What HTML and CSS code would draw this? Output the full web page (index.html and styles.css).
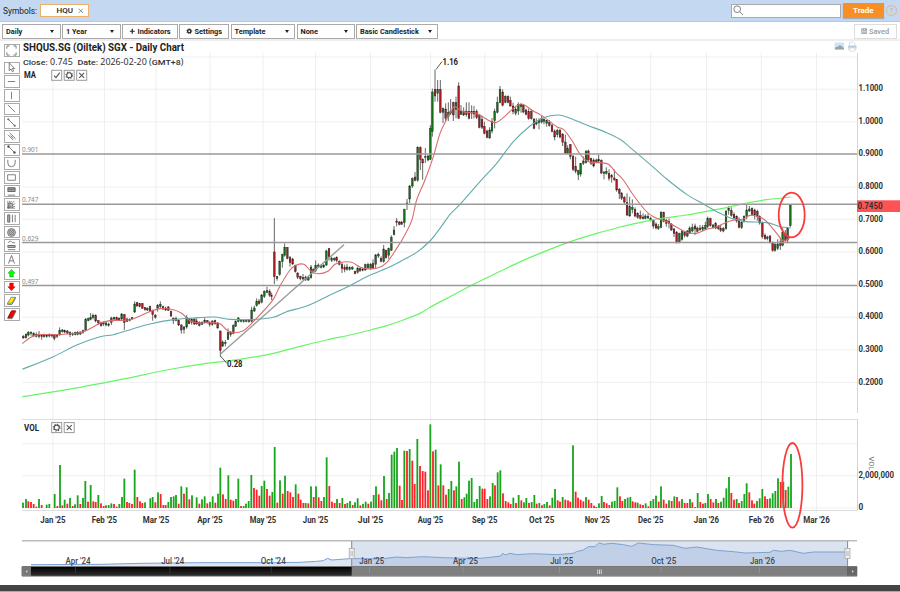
FILE: index.html
```html
<!DOCTYPE html>
<html lang="en">
<head>
<meta charset="utf-8">
<title>Daily Chart</title>
<link rel="stylesheet" href="styles.css">
</head>
<body>
<header class="symbols">
  <span class="symbols-label">Symbols:</span>
  <div class="symbol-tab"><span>HQU</span><svg class="tab-x" viewBox="0 0 6 6"><path d="M.7.7l4.6 4.6M5.3.7L.7 5.3"/></svg></div>
  <div class="search"><svg viewBox="0 0 12 12"><circle cx="4.6" cy="4.6" r="3.7"/><path d="M7.3 7.3L11 11"/></svg></div>
  <div class="trade">Trade</div>
  <div class="help">?</div>
</header>
<nav class="toolbar">
  <div class="box daily">Daily<i></i></div>
  <div class="box year">1 Year<i></i></div>
  <div class="box ind"><svg viewBox="0 0 8 8"><path d="M4 1v6M1 4h6" stroke="#222" stroke-width="1.5"/></svg>Indicators</div>
  <div class="box set"><svg viewBox="0 0 8 8"><circle cx="4" cy="4" r="2" fill="none" stroke="#222" stroke-width="1.7"/><circle cx="4" cy="4" r="3.1" fill="none" stroke="#222" stroke-width="1" stroke-dasharray="1.3 1.13"/></svg>Settings</div>
  <div class="box tpl">Template<i></i></div>
  <div class="box none">None<i></i></div>
  <div class="box type">Basic Candlestick<i></i></div>
  <div class="box saved"><svg viewBox="0 0 8 8"><path d="M1 1h6v6H1zM2.5 1v2.3h3V1M2 5.2h4" fill="none" stroke="#888"/></svg>Saved</div>
</nav>
<main class="workspace">
  <aside class="tools" id="tools"></aside>
  <svg class="chart" id="chart" viewBox="20 41 880 544"></svg>
</main>
<footer class="bottom"></footer>
<script src="chart.js"></script>
</body>
</html>
```
FILE: styles.css
```css
* { box-sizing: border-box; }
body { margin: 0; width: 900px; height: 592px; overflow: hidden; background: #fff; font-family: Roboto, sans-serif; color: #222; display: flex; flex-direction: column; }
.symbols { flex: none; height: 22px; background: #c4d9f1; border-bottom: 1px solid #bfc6ce; display: flex; align-items: center; padding: 0 3px; font-size: 8.4px; }
.symbols-label { width: 36.5px; }
.symbol-tab { width: 49px; height: 13px; background: #fff; border: 1px solid #efb06c; display: flex; align-items: center; justify-content: flex-end; gap: 5px; padding-right: 4px; font-size: 8px; font-weight: 500; }
.tab-x { width: 5.5px; height: 5.5px; fill: none; stroke: #888; stroke-width: 1; }
.search { margin-left: auto; width: 110px; height: 14px; background: #fff; border: 1px solid #aaa; padding-left: 1px; display: flex; align-items: center; }
.search svg { width: 11px; height: 11px; fill: none; stroke: #777; stroke-width: 1; }
.trade { width: 41.5px; height: 14.5px; margin-left: 2px; background: #f78f24; box-shadow: 0 1px 1px #8888; color: #fff; font-size: 8px; font-weight: 700; line-height: 15px; text-align: center; }
.help { width: 11px; height: 11px; margin-left: 2px; border: 1px solid #d9ba95; border-radius: 50%; color: #dfae78; line-height: 9.5px; text-align: center; font-size: 8px; }
.toolbar { flex: none; height: 19px; border-bottom: 2px solid #eee; display: flex; gap: 1.5px; padding: 1px 3.5px 0 2px; align-items: center; }
.box { height: 15px; border: 1px solid #aaa; display: flex; align-items: center; font-size: 7.35px; font-weight: 700; padding: 0 5.5px 0 3px; white-space: nowrap; }
.box i { margin-left: auto; border: 2.6px solid transparent; border-top: 3px solid #222; border-bottom: 0; }
.box svg { width: 6.5px; height: 6.5px; margin-right: 2px; }
.daily { width: 58.5px; } .year { width: 58.5px; } .ind { width: 55.5px; padding: 0 0 0 6px; } .set { width: 50px; padding: 0 0 0 6px; }
.tpl { width: 64.5px; } .none { width: 58px; } .type { width: 82px; }
.saved { margin-left: auto; width: 43px; padding: 0 0 0 6px; border-color: #ddd; color: #999; font-weight: 500; }
.workspace { flex: none; height: 544px; display: flex; }
.tools { width: 20px; padding: 3px 0 0 4px; }
.tool { width: 15.5px; height: 12.7px; margin-bottom: 1px; border: 1px solid #aaa; display: flex; justify-content: center; align-items: center; }
.tool:first-child { margin-bottom: 4.5px; height: 13px; }
.tool svg { width: 11px; height: 11px; fill: none; stroke: #666; stroke-width: .9; overflow: visible; }
.chart { width: 880px; height: 544px; display: block; }
.chart text { font-family: Roboto, sans-serif; font-size: 8.3px; font-weight: 700; fill: #333; }
.chart .title { font-size: 10px; fill: #222; }
.chart .info { font-family: "Noto Sans", sans-serif; font-size: 8px; font-weight: 400; }
.chart .info tspan { font-family: Roboto, sans-serif; font-weight: 500; }
.chart .level { font-family: "Noto Sans", sans-serif; font-size: 6.7px; font-weight: 400; fill: #888; }
.chart .time { font-size: 8.3px; font-weight: 500; fill: #444; }
.chart .mark { font-size: 8.3px; fill: #222; }
.chart .axis-name { font-weight: 400; font-size: 7.5px; fill: #777; }
.line { fill: none; }
.bottom { height: 7px; background: #444; border-bottom: 1px solid #aaa; }
```
FILE: chart.js
```js
const chart = document.getElementById('chart');
const out = [];
const line = (x1, y1, x2, y2, s, w = 1) => out.push(`<path d="M${x1} ${y1}L${x2} ${y2}" stroke="${s}" stroke-width="${w}" fill="none"/>`);
const rect = (x, y, w, h, f, extra = '') => out.push(`<rect x="${x}" y="${y}" width="${w}" height="${h}" fill="${f}" ${extra}/>`);
const text = (x, y, s, cls = '', len = 0, anchor = 'start') => out.push(`<text x="${x}" y="${y}" class="${cls}" text-anchor="${anchor}"${len ? ` textLength="${len}" lengthAdjust="spacingAndGlyphs"` : ''}>${s}</text>`);

// Grid
const months = [["Jan '25",53],["Feb '25",104.5],["Mar '25",156],["Apr '25",210],["May '25",263],["Jun '25",315.5],["Jul '25",370.5],["Aug '25",430.5],["Sep '25",484.7],["Oct '25",541.7],["Nov '25",597.3],["Dec '25",650.7],["Jan '26",706.5],["Feb '26",761.3],["Mar '26",816.5]];
months.forEach(([t, x]) => { line(x, 53, x, 514, '#efefef'); text(x, 523, t, '', t.startsWith('M') ? 26.5 : 25.3, 'middle'); });
[57,89.2,121.8,187,219.3,252,317.2,349.8,382.3,419.5,443.7,475.7,508].forEach(y => line(22, y, 857, y, '#efefef'));
line(22, 419.5, 857, 419.5, '#ddd'); line(22, 510.5, 857, 510.5, '#ddd');
line(857.5, 53, 857.5, 413, '#d4d4d4'); line(857.5, 419, 857.5, 510.5, '#d4d4d4');
for (let i = 0; i < 10; i++) text(858.5, 91.3 + i * 32.58, (1.1 - i / 10).toFixed(4), '', 24.5);

// Each group: origin, then "x bodyTop bodyBottom high low direction" in thirds of a pixel
const candles = [
[0,280,`70 169 174 165 176 r;78 163 173 160 176 g;85 157 165 153 169 g;93 157 160 154 167 g;101 160 168 157 170 r;109 163 169 157 172 g;117 163 169 153 175 r;125 166 170 162 179 r;132 163 170 161 173 g;140 165 170 162 173 g;148 163 168 160 172 r;156 164 168 162 173 g;163 165 175 163 181 r;171 163 169 162 174 g;179 151 165 142 167 g;187 150 155 147 158 g;194 152 156 149 160 g;202 153 159 150 163 r;210 157 164 154 171 r;218 160 164 157 168 g;226 158 164 155 166 g;233 158 163 153 166 g;241 156 162 154 165 g;249 152 157 149 161 g;257 118 152 114 154 g;265 115 122 113 124 g;272 113 118 99 121 g;279 106 113 101 118 g;287 106 123 103 127 r;295 122 129 121 135 r;303 129 137 125 140 r;310 128 132 124 138 g;318 129 135 125 139 g;326 132 136 128 140 r;334 114 127 110 135 g;342 113 117 110 121 g;350 113 121 110 123 r;357 115 120 112 122 g;365 102 117 99 120 g;373 104 128 102 150 r;381 117 124 113 126 g;389 118 122 115 124 g;396 113 117 111 118 g;404 72 96 64 99 g;411 68 78 66 80 r;419 71 80 69 82 r;427 71 85 69 87 r;435 83 89 81 92 r;442 85 90 82 93 g;450 80 94 77 96 r;458 91 104 89 122 r;466 106 112 102 116 r;473 76 86 72 95 g;481 73 80 64 85 g;489 80 87 77 90 r;497 84 90 80 93 g;505 81 91 78 93 r;513 94 108 92 111 r;520 115 121 112 132 r;528 115 121 110 124 g;536 121 135 117 138 r;544 135 150 132 161 r;552 141 148 138 161 g;560 113 141 105 146 g;567 116 131 114 133 r;575 117 127 115 134 g;583 117 132 115 135 r;590 123 132 115 134 r;598 127 137 124 139 r;606 127 133 124 135 g;614 121 127 114 130 g;622 122 127 120 130 g;629 127 134 124 140 r;637 123 134 121 137 g;645 122 131 119 134 r;653 129 144 127 146 r;661 153 211 152 230 r;668 186 198 181 201 g;676 188 191 180 199 g;684 158 178 145 180 g;692 158 164 153 170 r;700 137 160 133 163 g;707 124 139 121 141 g;715 114 124 111 127 g;723 120 124 117 127 g;731 121 125 118 128 g;739 121 125 118 127 g;747 121 125 117 128 r;755 90 125 80 127 g;763 84 93 77 96 g;770 65 77 55 80 g;777 63 71 57 74 r;785 45 67 42 70 g;793 34 49 31 54 g;801 32 37 20 40 g;809 34 46 28 51 r;815 47 50 38 60 r`],
[200,200,`223 156 230 54 252 r;231 230 236 228 242 g;239 184 224 182 227 g;247 164 185 161 203 g;254 142 166 130 170 g;262 142 175 141 178 r;270 173 188 168 200 r;278 177 192 174 195 r;286 196 215 194 218 r;293 219 232 217 237 r;301 229 236 227 241 r;309 233 237 222 241 g;317 231 239 227 243 r;325 233 240 228 243 g;333 201 233 195 236 g;340 209 216 205 221 r;347 197 212 181 216 g;355 195 200 190 204 r;363 197 202 194 205 g;371 195 201 193 204 g;379 153 195 149 198 g;387 146 170 144 182 r;395 175 181 170 186 g;403 176 180 172 184 g;410 172 182 169 187 r;418 184 193 181 196 r;426 194 206 187 219 r;434 203 209 194 217 r;441 201 208 191 212 g;449 203 209 199 212 g;457 203 207 198 210 g;465 214 221 212 223 r;473 205 217 200 221 g;480 206 212 203 216 r;488 207 211 203 214 g;496 194 210 191 212 g;504 194 203 188 207 g;512 193 205 189 208 g;519 191 204 178 207 r;527 165 193 162 205 g;535 163 168 158 174 g;543 175 184 169 187 r;551 147 185 135 188 g;558 151 173 149 176 r;566 146 166 143 176 g;574 112 151 106 153 g;582 90 104 78 106 g;590 63 67 54 79 r;598 66 73 63 76 r;605 66 73 63 75 r`],
[380,50,`73 479 518 476 532 g;81 459 464 447 480 g;89 408 447 405 460 g;97 386 408 382 414 g;105 381 391 366 394 r;113 292 391 289 395 g;121 293 328 289 360 r;128 328 339 325 389 r;136 320 322 294 339 g;144 318 330 315 334 g;151 235 328 225 330 g;157 126 245 116 260 g;165 118 138 59 155 r;173 118 130 90 155 g;181 118 187 90 190 r;189 176 187 172 219 g;197 177 205 160 213 r;205 187 200 157 213 g;212 184 190 147 195 g;220 158 195 155 213 r;228 158 178 140 205 g;236 108 205 97 207 r;243 183 193 165 195 g;251 184 195 172 198 r;259 183 194 157 200 g;267 184 205 157 208 r;275 184 190 166 207 g;282 184 192 168 205 g;290 184 203 178 207 r;298 197 232 193 235 r;306 208 232 197 237 r;313 229 250 215 253 r;321 243 262 239 265 r;329 240 264 232 266 g;336 214 243 204 250 g;344 185 212 176 235 g;352 157 187 140 190 g;360 118 157 108 160 g;368 126 166 118 169 r;376 139 157 136 160 r;384 139 157 136 160 r;391 151 168 140 170 r;399 168 185 158 193 r;407 177 190 168 196 g;415 163 183 157 195 g;423 163 170 160 188 g;430 165 186 163 190 r;438 180 193 176 196 r;446 185 206 176 209 r;454 184 206 180 209 r;462 207 235 205 238 r;469 216 222 205 226 g;477 212 218 205 238 g;485 206 217 196 220 g;492 208 214 205 223 g;500 212 220 210 230 g;508 217 226 210 230 r;516 226 244 222 247 r;524 243 261 238 271 r;532 241 254 236 262 g;540 240 261 238 265 r;548 252 277 250 288 r;556 276 309 254 312 r;563 296 310 286 312 g;571 284 319 282 328 r;579 319 358 315 363 r;587 349 364 320 370 r;595 362 374 359 390 g;602 341 372 339 380 g;610 333 340 319 345 g;618 305 338 300 341 g;625 303 330 299 335 r;633 326 340 323 345 r;641 330 348 325 352 r;649 330 337 326 340 g;656 328 333 315 340 g;664 331 369 328 372 r;672 366 370 364 388 g;679 364 370 352 374 g;687 370 385 358 392 r;695 377 382 372 398 r;703 384 389 358 393 r;710 389 420 387 425 r;718 418 430 414 447 r;725 430 445 426 450 r;733 443 456 438 465 r;741 458 495 430 498 r;749 470 498 440 500 g`],
[600,150,`97 173 178 148 190 g;105 178 198 172 202 r;113 190 203 187 206 r;121 196 205 182 208 r;129 201 206 190 208 g;136 198 205 193 208 g;144 199 204 190 207 g;152 206 211 200 214 g;160 211 228 207 236 r;168 222 234 217 238 r;175 230 236 222 240 g;183 187 232 183 235 g;191 187 214 185 217 r;199 211 220 206 230 r;207 215 221 205 235 r;214 222 240 219 243 r;222 237 250 234 261 r;230 247 277 243 281 r;238 251 276 248 280 g;246 244 268 240 272 g;254 247 257 243 262 r;262 243 258 240 262 g;269 234 249 229 252 g;277 232 243 221 247 g;285 228 237 221 255 r;292 234 244 230 248 r;300 234 239 225 243 r;308 232 239 225 243 g;316 227 237 215 240 g;323 206 230 200 234 g;331 206 227 203 230 r;339 225 233 222 236 g;347 220 234 216 238 r;355 229 236 225 240 r;362 236 242 225 246 r;370 236 243 231 247 r;378 184 236 180 239 g;386 174 182 169 194 g;394 181 196 172 200 r;402 193 204 187 208 r;410 199 213 196 218 r;417 209 232 202 235 r;425 217 233 213 237 g;432 199 215 196 218 g;440 180 200 164 208 g;448 177 183 168 186 g;456 175 193 172 197 r;464 180 195 176 208 r;472 184 200 179 212 r;479 199 219 196 224 r;487 219 260 215 266 r;495 256 266 250 270 r;502 261 266 257 271 g;510 258 276 255 280 r;518 278 302 275 305 r;525 284 301 278 305 g;533 282 296 268 300 g;541 276 287 266 300 r;548 247 286 234 289 g;556 252 272 240 276 r;563 235 270 231 280 g;571 165 227 162 232 g`]];
candles.forEach(([ox, oy, data]) => data.split(';').forEach(row => {
  const p = row.split(' '), v = p.slice(0, 5).map(Number), x = ox + v[0] / 3;
  line(x, oy + v[3] / 3, x, oy + v[4] / 3, '#555', .9);
  rect(x - .85, oy + v[1] / 3, 1.7, (v[2] - v[1]) / 3, p[5] === 'g' ? '#157018' : '#a81c20', 'stroke="#222" stroke-width=".4"');
}));

// Volume bars: "x top direction"
const volume = [
[0,`69 278g,78 267g,85 274r,93 276r,101 282r,109 290r,117 267g,125 285r,140 284g,148 282g,164 252g,172 288r,180 165g,187 286r,194 269g,202 281r,210 264g,218 288r,225 283g,233 256g,241 282r,249 264g,256 213g,264 275r,272 225g,280 274r,287 276r,295 255g,303 280r,311 288r,318 286g,326 285g,334 280g,342 282r,350 290r,358 282g,366 261g,373 206g,381 276r,388 279r,396 282r,404 179g,412 261r,420 274r,427 279r,435 277g,451 265g,458 261g,466 277r,474 247g,482 252r,490 285r,497 285r,505 276g,513 261g,521 259g,528 255g,536 281r,544 229g,552 251r,560 232g,568 268r,576 256g,590 262g,598 281r,606 268g,614 259g,622 280r,630 276g,638 259g,646 278r,654 251g,661 173g,669 253r,677 267r,685 196g,692 269r,700 272r,708 267g,715 206g,723 288r,731 288g,738 281g,746 273g,754 195g,762 234r,770 239r,778 257r,785 228g,793 212g,801 237r,809 257r,817 246g,824 111g,832 278r,840 211g,848 251r,855 197g,863 243r,871 247r,879 261r,887 223g,895 251r`],
[300,`2 269r,10 279r,17 279g,25 280r,33 229g,41 261r,48 229g,56 262r,64 273r,72 261g,80 142g,88 228r,96 275r,104 279r,111 267g,119 279r,127 264g,135 282r,142 279g,150 273g,158 285r,165 277g,173 265g,181 286r,189 282g,197 275g,205 281r,213 275g,221 255g,228 229g,236 253r,244 271r,252 198g,260 267r,267 249g,275 134g,283 125g,291 114g,299 227r,306 270r,313 122g,321 123r,329 117g,337 152r,344 222r,352 87g,360 168r,368 183r,376 185r,384 241r,391 43g,399 124r,407 119g,415 226r,422 163g,430 226r,438 254r,446 237g,454 213g,462 241r,469 229g,477 155g,485 267r,493 262g,500 251g,507 212g,515 204g,523 276g,531 267g,539 228g,547 236r,554 236r,562 267r,570 259g,578 219g,585 226r,593 187g,601 181g,609 250r,617 273r,625 277r,632 282r,640 263g,648 279r,656 255g,664 271r,672 277g,679 264g,687 279r,695 276g,703 255g,710 281r,718 279g,726 286r,733 282g,741 276g,749 286r,757 263g,765 237g,773 271r,780 275r,788 261g,796 269r,804 271r,811 275r,819 106g,827 245r,834 263r,842 269r,850 274r,858 261g,866 269r,874 279r,882 287r,889 291r,897 280g`],
[600,`5 258g,12 276r,20 280r,28 285r,36 275g,44 273g,52 232g,60 259r,67 273r,75 267g,83 263g,91 261g,98 274r,106 277r,113 278g,121 283r,129 285r,137 280g,145 289r,152 273g,160 267g,168 257g,176 275r,183 229g,191 269r,199 281r,207 271g,215 273r,223 259g,231 261r,238 274r,246 267g,254 279r,262 279r,270 267g,277 277r,285 291r,293 249g,301 276r,309 281r,316 279g,324 252g,332 267r,340 277r,348 267g,355 279r,363 275g,371 263g,379 235g,387 201g,394 249r,402 269r,410 267g,417 279r,425 273g,433 252g,440 220g,448 247r,456 271r,463 281r,471 273g,479 265g,487 237g,495 259r,502 267r,510 265g,518 250g,526 243g,534 205g,542 216r,550 215g,557 240r,565 230g,573 132g`]];
volume.forEach(([ox, data]) => data.split(',').forEach(s => {
  const g = s.endsWith('g'), [x, y] = s.slice(0, -1).split(' ').map(Number);
  rect((ox + x / 3 - .9).toFixed(2), (410 + y / 3).toFixed(2), 1.8, ((294 - y) / 3).toFixed(2), g ? '#18a51c' : '#ff2028');
}));

// Moving averages, smoothed through their key points
const toPage = groups => groups.flatMap(([ox, oy, s]) => s.split(',').map(q => { const [x, y] = q.split(' ').map(Number); return [ox + x / 3, oy + y / 3]; }));
const smooth = (groups, colour, w = 1.1) => {
  const p = toPage(groups);
  let d = `M${p[0]}`;
  for (let i = 0; i < p.length - 1; i++) {
    const a = p[i - 1] || p[i], b = p[i], c = p[i + 1], e = p[i + 2] || c;
    d += `C${b[0] + (c[0] - a[0]) / 6} ${b[1] + (c[1] - a[1]) / 6} ${c[0] - (e[0] - b[0]) / 6} ${c[1] - (e[1] - b[1]) / 6} ${c[0]} ${c[1]}`;
  }
  out.push(`<path class="line" d="${d}" stroke="${colour}" stroke-width="${w}"/>`);
};
smooth([[0,280,'67 350,240 322,360 299,500 270,600 253,720 238,820 220,900 199'],[200,200,'380 420,450 405,500 393,560 377,610 360,660 340'],[430,190,'0 352,60 320,125 286,200 249,280 211,335 188,415 157,500 130,560 114'],[600,150,'60 231,150 211,200 203,260 195,320 184,380 173,440 159,500 149,572 141']], '#66f566', 1.2);
smooth([[0,280,'67 268,160 230,230 195,300 170,340 164,400 146,450 132,520 119,580 114,640 111,690 118,750 119,820 112'],[200,200,'260 335,320 318,380 290,440 262,500 230,560 205,600 185,650 157,690 123,720 85,750 43'],[380,50,'240 463,300 395,350 340,400 275,450 228,490 203,535 195,570 205,620 225,680 248,720 268,750 292'],[600,150,'150 43,200 87,260 133,310 162,360 190,400 207,440 215,500 218,540 230,572 234']], '#64abad');
smooth([[0,280,'67 191,90 173,115 164,160 164,200 162,250 155,300 130,330 122,390 119,440 99,480 86,520 89,545 100,570 122,600 129,655 129,680 150,700 158,730 152,755 130'],[200,200,'215 305,240 258,270 210,290 195,312 193,335 215,360 221,385 213,405 193,430 186,455 187,490 205,530 205,560 188,590 145,610 113,635 62'],[380,50,'110 450,135 390,160 320,180 250,200 208,215 180,225 170,250 185,290 190,315 205,345 218,370 203,400 175,425 162,460 183,490 200,530 230,550 238,575 270,600 312,625 335,660 338,685 343,710 370'],[600,150,'70 90,100 135,135 180,160 200,200 215,230 232,260 247,290 250,320 238,350 230,390 213,430 207,450 196,480 202,500 215,530 250,550 272,572 262']], '#d96c6e');

// Levels, trend line and annotations
[[154.1,'0.901'],[204.3,'0.747'],[242.6,'0.629'],[285.5,'0.497']].forEach(([y, t]) => { line(22, y, 857, y, '#999', 1.5); text(22, y - 2, t, 'level', 16.5); });
line(220.5, 354, 344, 244.7, '#999', 1.4);
line(436, 69.5, 442, 61.5, '#444', .9); text(442.5, 64.7, '1.16', 'mark', 15.5);
line(220.5, 356, 227, 363.5, '#444', .9); text(227, 367, '0.28', 'mark', 15.5);
rect(857, 200.3, 43, 11.7, '#ff5353'); text(857.5, 209.3, '0.7450', '', 25);
text(858.5, 478, '2,000,000', '', 35.5); text(858.5, 510.4, '0');
out.push('<text class="axis-name" transform="translate(868.5 456.5) rotate(90)" textLength="14">VOL</text>');
out.push('<g fill="none" stroke="#fa3c3c" stroke-width="1.8"><ellipse cx="791.7" cy="215" rx="13" ry="22.3"/><ellipse cx="792.4" cy="485.3" rx="10" ry="42.3"/></g>');
text(23, 51, 'SHQUS.SG (Oiltek) SGX - Daily Chart', 'title', 161);
text(23, 65.2, '<tspan>Close:</tspan> 0.745 &#160;<tspan>Date:</tspan> 2026-02-20 (<tspan>GMT+8</tspan>)', 'info', 160.5);
text(24, 78, 'MA', 'mark', 12); text(24, 430.8, 'VOL', 'mark', 15);
const small = (x, y, kind) => {
  rect(x, y, 10, 10, '#fff', 'stroke="#999" stroke-width="1"');
  const d = { check: 'M2.3 5.3l2 2 3.7-5', x: 'M2.5 2.5l5 5m0-5l-5 5' }[kind];
  out.push(`<g transform="translate(${x} ${y})" fill="none" stroke="#555" stroke-width="1.1">${d ? `<path d="${d}"/>` : '<circle cx="5" cy="5" r="2.5"/><circle cx="5" cy="5" r="3.3" stroke-dasharray="1.2 1.39"/>'}</g>`);
};
small(51.7, 70.3, 'check'); small(64.2, 70.3, 'gear'); small(76.7, 70.3, 'x');
small(51.7, 422.6, 'gear'); small(64.2, 422.6, 'x');
rect(834.5, 42.5, 9.5, 7, '#cfe4f4'); out.push('<path d="M835 49.5v-2l3-1 2-1.5 4 3v1.5z" fill="#9aa5a8"/>');
out.push('<rect x="848" y="45" width="8.5" height="5" rx="1" fill="#dfe3e8"/><path d="M849.5 45v-3h4l1.5 1.5V45M849.5 48h5.5v3h-5.5z" fill="#fff" stroke="#d5d8dc" stroke-width=".8"/><path d="M848 46.8h8.5" stroke="#abbfd6"/>');

// Navigator
const nav = toPage([[0,410,'93 464,300 463,420 460,600 458,820 458,900 457'],[300,410,'50 454,70 452,83 445,95 450,150 446,250 446,290 441,320 443,370 440,430 443,530 446,570 442,603 438,608 430,615 435,630 430,650 434,700 431,770 434,820 430,830 425,850 420,865 410,885 410,895 400'],[600,410,'0 399,10 403,35 400,70 404,95 409,115 399,160 404,220 406,255 415,290 411,350 421,400 425,435 429,510 427,520 421,545 424,570 421,610 430,640 426,742 426']]);
const navLine = 'M' + nav.map(p => p.join(' ')).join('L');
rect(351.7, 541, 495.8, 25.5, '#dae3ef');
out.push(`<path d="${navLine}V566.5H31Z" fill="#7298c8" fill-opacity=".24"/><path d="${navLine}" class="line" stroke="#7da2cf"/>`);
line(22, 540.8, 857, 540.8, '#bbb', 1.4); line(351.7, 541, 351.7, 576, '#888'); line(847.6, 541, 847.6, 567, '#888');
[["Apr '24",78],["Jul '24",172.7],["Oct '24",273.3],["Jan '25",371.7],["Apr '25",465.5],["Jul '25",561.7],["Oct '25",663.8],["Jan '26",762.5]].forEach(([t, x]) => text(x, 564, t, 'time', t.startsWith('Jul') ? 23 : 25, 'middle'));
out.push('<linearGradient id="dark" x2="0" y2="1"><stop stop-color="#000"/><stop offset="1" stop-color="#303030"/></linearGradient>');
rect(21.7, 566.7, 835.5, 9.3, 'url(#dark)'); rect(351.7, 567, 496, 9, '#7f7f7f');
[75.5,170,271.2].forEach(x => line(x, 567, x, 573, '#444', .7));
[369.5,463,559.5,661,759.5].forEach(x => line(x, 567, x, 573, '#999', .7));
rect(22, 567, 9, 9, '#777'); rect(847.5, 567, 9.5, 9, '#666');
out.push('<path d="M27.3 570v3l-1.6-1.5zM852 570v3l1.6-1.5z" fill="#ddd"/>');
line(22, 566.5, 857, 566.5, '#777'); line(22, 576.3, 857, 576.3, '#999');
[597.7,599.5,601.3].forEach(x => line(x, 569.5, x, 574, '#eee', .8));
[351.7,847.5].forEach(x => { rect(x - 2.5, 548.5, 5, 10, '#eee', 'stroke="#aaa" stroke-width=".8"'); line(x - .7, 551, x - .7, 556, '#999', .5); line(x + .7, 551, x + .7, 556, '#999', .5); });
chart.innerHTML = out.join('');

// Drawing tools
const icons = [
'<path d="M1 4V1h3M8 1h3v3M11 8v3H8M4 11H1V8"/>',
'<path d="M3.5 1v8.5l2-1.8 1.5 3 1.4-.8-1.5-2.8h2.6z"/>',
'<path d="M2 6h8"/>','<path d="M6 2v8"/>','<path d="M2 2l8 8"/>',
'<path d="M2 2l8 8"/><circle cx="2.5" cy="2.5" r=".7" fill="#666"/><circle cx="9.5" cy="9.5" r=".7" fill="#666"/>',
'<path d="M2 4l6 6M4 2l6.5 6.5M5 5l3 3"/>',
'<path d="M3 3l6 6"/><circle cx="2.7" cy="2.7" r="1" fill="#555"/><circle cx="9.3" cy="9.3" r="1" fill="#555"/>',
'<path d="M2 2v3.5a4 4 0 008 0V2"/>','<path d="M1.8 3h8.4v6H1.8z"/>',
'<path d="M2 2h8v4H2z" fill="#aaa"/><path d="M2 2h8M2 4h8M2 6h8M2 10h8"/>',
'<path d="M2 2v8h8M2 10l2-8M2 10l4-8M2 10l7-8M2 10l8-5M2 10l8-2M2 5h5v5" stroke-width=".8"/>',
'<path d="M2 2v8M4 2v8M7 2v8M10 2v8"/><path d="M2 2h2v8H2z" fill="#bbb"/>',
'<circle cx="6" cy="6" r="4.3" fill="#ccc"/><circle cx="6" cy="6" r="2.7"/><circle cx="6" cy="6" r="1"/>',
'<path d="M2 3l3-2 2 2h3M2 6h8M2 8h8M2 10.5h8"/><path d="M2 6h8v2H2z" fill="#bbb"/>',
'<path d="M2.7 10.5L6 1.5l3.3 9M3.9 7.5h4.2"/>',
'<path d="M6 1.5l4 4.2H8v4H4v-4H2z" fill="#0f0" stroke="#191" stroke-width=".5"/>',
'<path d="M6 10.5l4-4.2H8v-4H4v4H2z" fill="#f00" stroke="#a11" stroke-width=".5"/>',
'<path d="M1.7 9l4-6.5h4.5L6.5 9z" fill="#fff000" stroke="#777"/><path d="M1.7 9v1.3h4.8L10.2 4V2.5"/>',
'<path d="M2 9.5l4-7.5h4.5L6.5 9.5z" fill="#f00" stroke="#800"/><path d="M2 9.5v1h4.8L10.5 3V2"/>'];
document.getElementById('tools').innerHTML = icons.map(i => `<div class="tool"><svg viewBox="0 0 12 12">${i}</svg></div>`).join('');
```
